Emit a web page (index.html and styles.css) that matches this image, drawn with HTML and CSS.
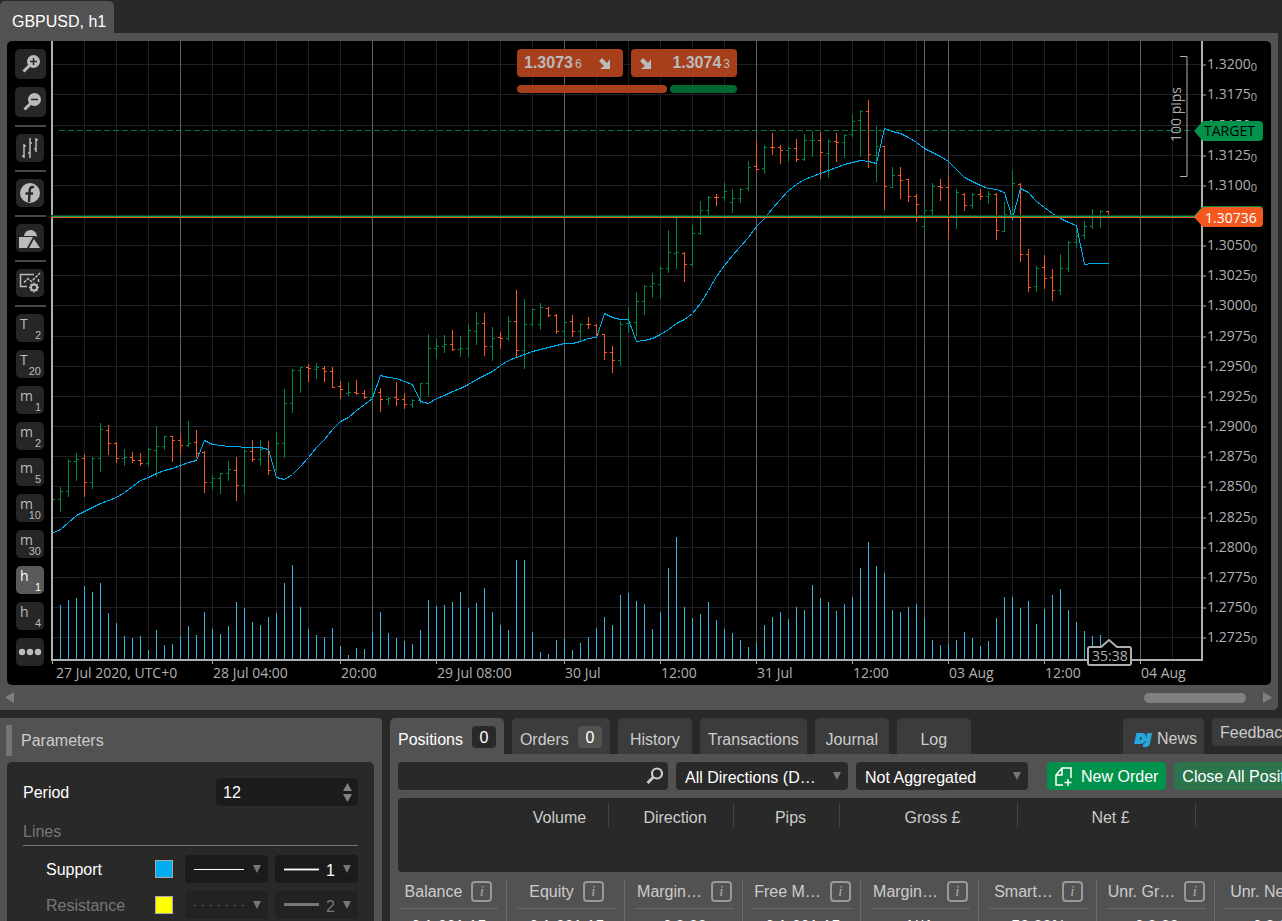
FILE: index.html
```html
<!DOCTYPE html>
<html lang="en">

<head>
    <meta charset="UTF-8">
    <meta name="viewport" content="width=device-width, initial-scale=1.0">
    <title>GBPUSD, h1</title>
    <link rel="stylesheet" href="styles.css">
</head>

<body>
    <div class="chart-tabs">
        <button class="chart-tab">GBPUSD, h1</button>
    </div>

    <section class="chart-window">
        <div class="chart-panel">
            <div class="toolbar">
                <button class="tool zoom" aria-label="Zoom in">
                    <svg width="20" height="20" viewBox="0 0 20 20">
                        <path d="M8.5 11.5L2.5 17.5" stroke="#bbb" stroke-width="3" />
                        <circle cx="12.5" cy="7.5" r="6.5" fill="#bbb" />
                        <path d="M12.5 4v7M9 7.5h7" stroke="#262626" stroke-width="1.5" />
                    </svg>
                </button>
                <button class="tool zoom" aria-label="Zoom out">
                    <svg width="20" height="20" viewBox="0 0 20 20">
                        <path d="M9.5 11.5L3.5 17.5" stroke="#bbb" stroke-width="3" />
                        <circle cx="13.5" cy="7.5" r="6.5" fill="#bbb" />
                        <path d="M10 7.5h7" stroke="#262626" stroke-width="1.5" />
                    </svg>
                </button>
                <hr>
                <button class="tool" aria-label="Chart type">
                    <svg width="20" height="22" viewBox="0 0 20 22" stroke="#bbb" fill="none">
                        <path d="M4 7v14M2 19h2M4 9h2M10 1v20M8 16h2M10 6h2M16 1v14M14 12h2M16 3h2" stroke-width="1.5" />
                    </svg>
                </button>
                <hr>
                <button class="tool" aria-label="Indicators">
                    <svg width="20" height="20" viewBox="0 0 20 20">
                        <circle cx="10" cy="10" r="10" fill="#bbb" />
                        <path d="M14 4.5C11 3 9.8 5 9.6 8L9 19M5.5 10.5h7.5" stroke="#262626" stroke-width="2.4" fill="none" />
                    </svg>
                </button>
                <hr>
                <button class="tool" aria-label="Objects">
                    <svg width="22" height="22" viewBox="0 0 22 22" fill="#bbb">
                        <path d="M5 9a6.500 6.500 0 1 1 13 1l-2-1z" />
                        <path d="M0 10h14L8 21H0z" />
                        <path d="M15 12l6 9H10z" />
                    </svg>
                </button>
                <hr>
                <button class="tool" aria-label="Chart settings">
                    <svg width="22" height="22" viewBox="0 0 22 22" fill="none" stroke="#bbb" stroke-width="1.5">
                        <path d="M15 2.500H1.500v12H8M19.500 7v3" />
                        <path d="M5 10.500l4-4 3.500 3L21 1" stroke-dasharray="3 1" />
                        <circle cx="15" cy="15.500" r="3" stroke-width="2" />
                        <path d="M15 10.500v2M15 18.500v2M10 15.500h2M18 15.500h2M11.500 12l1.500 1.500M17 17.500l1.500 1.500M18.500 12L17 13.500M13 17.500L11.500 19" />
                    </svg>
                </button>
                <hr>
                <button class="tool period">T<sub>2</sub></button>
                <button class="tool period">T<sub>20</sub></button>
                <button class="tool period">m<sub>1</sub></button>
                <button class="tool period">m<sub>2</sub></button>
                <button class="tool period">m<sub>5</sub></button>
                <button class="tool period">m<sub>10</sub></button>
                <button class="tool period">m<sub>30</sub></button>
                <button class="tool period active">h<sub>1</sub></button>
                <button class="tool period">h<sub>4</sub></button>
                <button class="tool" aria-label="More periods">
                    <svg width="24" height="8" viewBox="0 0 24 8" fill="#bbb">
                        <circle cx="4" cy="4" r="3.200" />
                        <circle cx="12" cy="4" r="3.200" />
                        <circle cx="20" cy="4" r="3.200" />
                    </svg>
                </button>
            </div>

            <div class="plot">
                <svg id="chart" role="img" aria-label="GBPUSD price chart"></svg>

                <div class="quotes">
                    <button class="quote">
                        <span>1.3073<small>6</small></span>
                        <svg width="12" height="12" viewBox="0 0 12 12" fill="#bbb"><path d="M0 3l3-3 5 5 3-4v10H1l4-3z" /></svg>
                    </button>
                    <button class="quote">
                        <svg width="12" height="12" viewBox="0 0 12 12" fill="#bbb"><path d="M0 3l3-3 5 5 3-4v10H1l4-3z" /></svg>
                        <span>1.3074<small>3</small></span>
                    </button>
                    <div class="sentiment">
                        <span class="sellers"></span>
                        <span class="buyers"></span>
                    </div>
                </div>
            </div>
        </div>

        <div class="scrollbar">
            <button class="arrow-left" aria-label="Scroll left"></button>
            <div class="thumb"></div>
            <button class="arrow-right" aria-label="Scroll right"></button>
        </div>
    </section>

    <div class="bottom">
        <section class="parameters">
            <h2>Parameters</h2>
            <div class="params-body">
                <div class="param-row">
                    <label for="period">Period</label>
                    <div class="spinner">
                        <input type="number" id="period" value="12" min="1">
                        <button class="arrow-up" aria-label="Increase"></button>
                        <button class="arrow-down" aria-label="Decrease"></button>
                    </div>
                </div>
                <h3>Lines</h3>
                <div class="line-row">
                    <label for="supportColor">Support</label>
                    <input type="color" id="supportColor" value="#00aeef">
                    <div class="select"><select class="style solid" aria-label="Support style"><option></option></select></div>
                    <div class="select"><select class="weight thin" aria-label="Support width"><option>1</option><option>2</option></select></div>
                </div>
                <div class="line-row muted">
                    <label for="resistanceColor">Resistance</label>
                    <input type="color" id="resistanceColor" value="#ffff00">
                    <div class="select"><select class="style dotted" aria-label="Resistance style"><option></option></select></div>
                    <div class="select"><select class="weight thick" aria-label="Resistance width"><option>2</option><option>1</option></select></div>
                </div>
            </div>
        </section>

        <section class="account">
            <div class="tabs">
                <button class="tab active">Positions <span class="badge">0</span></button>
                <button class="tab">Orders <span class="badge">0</span></button>
                <button class="tab">History</button>
                <button class="tab">Transactions</button>
                <button class="tab">Journal</button>
                <button class="tab">Log</button>
                <button class="tab news"><b class="dj">DJ</b> News</button>
                <button class="feedback">Feedback</button>
            </div>

            <div class="account-body">
                <div class="filters">
                    <div class="search">
                        <input type="text" aria-label="Search positions">
                        <svg width="18" height="18" viewBox="0 0 18 18" fill="none" stroke="#ccc">
                            <circle cx="11" cy="6.500" r="5" stroke-width="2.200" />
                            <path d="M7 10.500L1.500 16" stroke-width="3" />
                        </svg>
                    </div>
                    <div class="select"><select aria-label="Direction"><option>All Directions (D…</option></select></div>
                    <div class="select"><select aria-label="Aggregation"><option>Not Aggregated</option></select></div>
                    <button class="new-order">
                        <svg width="18" height="20" viewBox="0 0 18 20" fill="none" stroke="#fff" stroke-width="1.500">
                            <path d="M8 18H1V8l6-7h9v10M1 8h6V1M13 12v7M9.500 15.500h7" />
                        </svg>
                        New Order
                    </button>
                    <button class="close-all">Close All Positions</button>
                </div>

                <div class="positions">
                    <table>
                        <thead>
                            <tr>
                                <th class="c-id"></th>
                                <th class="c-volume">Volume</th>
                                <th class="c-direction">Direction</th>
                                <th class="c-pips">Pips</th>
                                <th class="c-money">Gross £</th>
                                <th class="c-money">Net £</th>
                                <th></th>
                            </tr>
                        </thead>
                    </table>
                </div>

                <dl class="metrics">
                    <div><dt>Balance <i>i</i></dt><dd>£ 1,661.15</dd></div>
                    <div><dt>Equity <i>i</i></dt><dd>£ 1,661.15</dd></div>
                    <div><dt>Margin… <i>i</i></dt><dd>£ 0.00</dd></div>
                    <div><dt>Free M… <i>i</i></dt><dd>£ 1,661.15</dd></div>
                    <div><dt>Margin… <i>i</i></dt><dd>N/A</dd></div>
                    <div><dt>Smart… <i>i</i></dt><dd>50.00%</dd></div>
                    <div><dt>Unr. Gr… <i>i</i></dt><dd>£ 0.00</dd></div>
                    <div><dt>Unr. Net <i>i</i></dt><dd>£ 0.00</dd></div>
                </dl>
            </div>
        </section>
    </div>

    <script src="chart.js"></script>
</body>

</html>
```

FILE: styles.css
```css
* {
    box-sizing: border-box;
}

body {
    font-family: "Liberation Sans", Arial, sans-serif;
    font-size: 16px;
    line-height: 19px;
    background-color: #292929;
    color: #ccc;
    margin: 0;
    height: 100vh;
    overflow: hidden;
}

button,
input,
select {
    font: inherit;
    color: inherit;
    border: none;
    margin: 0;
    padding: 0;
    background: none;
}

button {
    cursor: pointer;
    white-space: nowrap;
}

/* chart window */

.chart-tabs {
    display: flex;
    padding-top: 1px;
}

.chart-tab {
    height: 32px;
    padding: 8px 8px 0 12px;
    background-color: #525252;
    color: white;
    border-radius: 5px 5px 0 0;
}

.chart-window {
    background-color: #525252;
    margin-right: 4px;
    padding: 8px 7px 0;
    border-radius: 0 0 5px 0;
}

.chart-panel {
    display: flex;
    background-color: black;
    border-radius: 5px;
    overflow: hidden;
}

.toolbar {
    display: flex;
    flex-direction: column;
    gap: 8px;
    width: 44px;
    padding: 8px 5px 8px 8px;
}

.toolbar hr {
    width: 31px;
    height: 2px;
    margin: 0 0 -1px;
    border: none;
    background-color: #484848;
}

.tool {
    display: flex;
    align-items: center;
    justify-content: center;
    width: 28px;
    height: 28px;
    margin-left: 1px;
    background-color: #262626;
    border-radius: 5px;
    flex-shrink: 0;
}

.tool.zoom {
    width: 31px;
    height: 30px;
    margin-left: 0;
}

.tool.period {
    justify-content: space-between;
    align-items: flex-start;
    padding: 0 3px 0 4px;
    font-family: "Open Sans", "Noto Sans", sans-serif;
    font-size: 14px;
    line-height: 20px;
    color: #bbb;
}

.tool.period sub {
    align-self: flex-end;
    margin-left: -8px;
    font-family: "Liberation Sans", Arial, sans-serif;
    font-size: 11px;
    line-height: 14px;
}

.tool.period.active {
    background-color: #5a5a5a;
    color: white;
}

.plot {
    position: relative;
    flex: 1;
    min-width: 0;
}

#chart {
    display: block;
    width: 100%;
    height: 644px;
    font-family: "Open Sans", "Noto Sans", sans-serif;
    font-size: 14px;
    fill: #b0b0b0;
}

#chart .sub {
    font-size: 11px;
}

#chart .tag-text {
    fill: black;
}

#chart .tag-text.light {
    fill: white;
}

/* the price axis on the right takes 68px */
.quotes {
    position: absolute;
    top: 8px;
    left: 0;
    right: 68px;
    display: grid;
    grid-template-columns: 106px 106px;
    justify-content: center;
    gap: 8px;
}

.quote {
    display: flex;
    align-items: center;
    justify-content: space-between;
    height: 28px;
    padding: 1px 12px 0 7px;
    background-color: #a83f1c;
    border-radius: 4px;
    color: #bbb;
    font-weight: bold;
}

.quote + .quote {
    padding: 1px 7px 0 9px;
}

.quote small {
    margin-left: 2px;
    font-size: 12px;
    font-weight: normal;
}

.sentiment {
    display: flex;
    grid-column: span 2;
    gap: 3px;
    height: 8px;
}

.sentiment span {
    border-radius: 4px;
}

.sellers {
    flex: 150;
    background-color: #a83f1c;
}

.buyers {
    flex: 67;
    background-color: #006830;
}

.scrollbar {
    display: flex;
    align-items: center;
    height: 25px;
    margin: 0 -1px 0 -2px;
}

.thumb {
    width: 102px;
    height: 10px;
    margin: 0 17px 0 auto;
    background-color: #808080;
    border-radius: 5px;
}

.arrow-left,
.arrow-right,
.arrow-up,
.arrow-down {
    width: 9px;
    height: 11px;
    background-color: #808080;
}

.arrow-left {
    clip-path: polygon(100% 0, 100% 100%, 0 50%);
}

.arrow-right {
    clip-path: polygon(0 0, 100% 50%, 0 100%);
}

.arrow-up {
    clip-path: polygon(50% 0, 100% 100%, 0 100%);
}

.arrow-down {
    clip-path: polygon(0 0, 100% 0, 50% 100%);
}

/* bottom area */

.bottom {
    display: flex;
    gap: 8px;
    margin-top: 8px;
}

.parameters {
    width: 382px;
    flex-shrink: 0;
    padding: 7px 8px 8px 6px;
    background-color: #525252;
    border-radius: 0 4px 0 0;
}

.parameters h2 {
    margin: 0 0 6px;
    padding-left: 9px;
    border-left: 6px solid #757575;
    font-size: 16px;
    font-weight: normal;
    line-height: 31px;
}

.params-body {
    margin-left: 1px;
    padding: 16px;
    background-color: #292929;
    border-radius: 5px;
    color: white;
}

.param-row,
.line-row {
    display: flex;
    align-items: center;
}

.param-row {
    justify-content: space-between;
}

.spinner {
    display: grid;
    grid-template-columns: 1fr 9px;
    row-gap: 3px;
    align-content: center;
    width: 142px;
    height: 28px;
    padding: 1px 6px 0 7px;
    background-color: #1b1b1b;
    border-radius: 4px;
}

.spinner input {
    grid-row: span 2;
    width: 100%;
    outline: none;
    appearance: textfield;
}

.spinner input::-webkit-inner-spin-button {
    display: none;
}

.spinner button {
    height: 8px;
}

.params-body h3 {
    margin: 16px 0 9px;
    padding-bottom: 3px;
    border-bottom: 1px solid #757575;
    color: #777;
    font-size: 16px;
    font-weight: normal;
    line-height: 20px;
}

.line-row {
    gap: 7px;
    margin-bottom: 8px;
    padding-left: 23px;
}

.line-row label {
    flex: 1;
}

.param-row label,
.line-row label {
    padding-top: 1px;
}

.line-row .select {
    width: 83px;
    background-color: #1b1b1b;
}

.line-row input {
    width: 18px;
    height: 18px;
    margin-right: 5px;
    border: 1px solid #aaa;
    flex-shrink: 0;
}

.line-row input::-webkit-color-swatch-wrapper {
    padding: 0;
}

.line-row input::-webkit-color-swatch {
    border: none;
}

.line-row.muted {
    color: #777;
}

.line-row.muted .select {
    background-color: #222;
}

.select {
    position: relative;
    height: 28px;
    background-color: #292929;
    border-radius: 4px;
    color: white;
}

.muted .select {
    color: #777;
}

.select select {
    appearance: none;
    width: 100%;
    height: 100%;
    padding: 3px 24px 0 9px;
    outline: none;
}

.select::after {
    content: "";
    position: absolute;
    top: 10px;
    right: 7px;
    width: 8px;
    height: 8px;
    background-color: #777;
    clip-path: polygon(0 0, 100% 0, 50% 100%);
    pointer-events: none;
}

.select .style {
    background: linear-gradient(white, white) 9px 14px / 50px 1px no-repeat;
}

.select .style.dotted {
    background: repeating-linear-gradient(to right, #666 0 2px, transparent 2px 8px) 9px 14px / 50px 1px no-repeat;
}

.select .weight {
    padding-left: 51px;
    padding-right: 0;
    background: linear-gradient(white, white) 9px 14px / 35px 1px no-repeat, linear-gradient(#777, #777) 9px 13px / 35px 3px no-repeat;
}

.select .weight.thick {
    background: linear-gradient(#777, #777) 9px 12px / 35px 3px no-repeat;
}

.account {
    flex: 1;
    min-width: 0;
}

.tabs {
    display: flex;
    gap: 8px;
    height: 36px;
}

.tab {
    display: flex;
    align-items: center;
    justify-content: center;
    min-width: 74px;
    padding: 7px 8px 0;
    background-color: #3c3c3c;
    border-radius: 5px 5px 0 0;
    flex-shrink: 0;
}

.tab.active {
    background-color: #525252;
    color: white;
}

.badge {
    width: 24px;
    height: 22px;
    margin: -5px 0 0 9px;
    background-color: #525252;
    border-radius: 4px;
    color: white;
    line-height: 24px;
}

.active .badge {
    background-color: #292929;
}

.news {
    gap: 6px;
    margin-left: auto;
    padding: 5px 7px 0 12px;
}

.dj {
    font-family: "DejaVu Sans", sans-serif;
    font-size: 13px;
    font-style: oblique;
    color: #28a8e0;
    -webkit-text-stroke: 2px #28a8e0;
}

.feedback {
    width: 70px;
    height: 28px;
    padding-left: 8px;
    overflow: hidden;
    background-color: #3c3c3c;
    border-radius: 4px 0 0 4px;
    flex-shrink: 0;
    text-align: left;
}

.account-body {
    padding: 8px 0 0 8px;
    background-color: #525252;
}

.filters {
    display: flex;
    gap: 8px;
    height: 28px;
}

.filters > * {
    flex-shrink: 0;
}

.filters .select {
    width: 172px;
}

.search {
    display: flex;
    align-items: center;
    width: 270px;
    padding: 0 4px 0 8px;
    background-color: #292929;
    border-radius: 4px;
}

.search input {
    flex: 1;
    min-width: 0;
    outline: none;
}

.new-order,
.close-all {
    display: flex;
    align-items: center;
    padding: 1px 7px 0 8px;
    background-color: #00924a;
    border-radius: 4px;
    color: white;
}

.new-order {
    gap: 8px;
    margin-left: 11px;
    padding-right: 8px;
}

.close-all {
    background-color: #2b744c;
}

.account-body,
.positions {
    overflow: hidden;
}

.positions {
    height: 74px;
    margin-top: 8px;
    background-color: #292929;
    border-radius: 4px 0 0 4px;
}

.positions table {
    width: 100%;
    min-width: 884px;
    table-layout: fixed;
    border-collapse: collapse;
}

.positions th {
    height: 36px;
    padding: 2px 0 0 7px;
    font-weight: normal;
    background: linear-gradient(#454545, #454545) right 5px / 1px 24px no-repeat;
}

.positions th.c-id,
.positions th:last-child {
    background: none;
}

.c-id {
    width: 105px;
}

.c-volume {
    width: 106px;
}

.c-direction {
    width: 125px;
}

.c-pips {
    width: 106px;
}

.c-money {
    width: 178px;
}

.metrics {
    display: flex;
    margin: 8px 0 0 -9px;
}

.metrics div {
    width: 118px;
    padding: 0 8px 0 10px;
    border-right: 1px solid #6a6a6a;
    flex-shrink: 0;
}

.metrics dt {
    display: flex;
    align-items: center;
    justify-content: center;
    gap: 9px;
    height: 29px;
    padding-bottom: 6px;
    border-bottom: 1px solid #6a6a6a;
    white-space: nowrap;
}

.metrics i {
    width: 21px;
    height: 21px;
    border: 2px solid #999;
    border-radius: 4px;
    color: #aaa;
    font: italic 15px/16px "Liberation Serif", serif;
    text-align: center;
}

.metrics dd {
    margin: 8px 0 0;
    text-align: center;
    color: white;
}
```

FILE: chart.js
```javascript
const svg = document.getElementById("chart");
const TOP = 41;      // vertical origin of the data below
const FIRST = 9;     // x of the first bar
const STEP = 8;
const AXIS_Y = 618;
const GREEN = "#00853e";
const RED = "#f4581e";

// high, low, open, close
const bars = [
    [487,512,499,491],[459,497,491,461],[453,481,461,459],[454,497,458,482],[457,489,482,458],[423,472,458,429],
    [425,455,430,443],[442,463,443,458],[449,466,458,457],[452,463,457,460],[453,466,460,463],[448,467,463,449],
    [426,477,450,446],[436,450,446,436],[436,462,436,440],[435,454,440,445],[421,447,445,443],[430,458,442,453],
    [451,493,452,482],[475,490,482,478],[473,494,478,473],[461,481,473,469],[457,501,470,485],[449,494,485,451],
    [440,462,451,459],[440,466,459,449],[441,475,449,470],[432,471,469,443],[389,458,443,403],[369,413,403,370],
    [367,393,370,367],[364,382,367,368],[363,379,369,367],[366,382,368,371],[367,388,371,387],[381,399,386,389],
    [382,396,393,392],[380,395,392,393],[390,399,393,397],[379,398,397,393],[388,412,392,399],[397,405,399,398],
    [382,406,397,399],[393,409,399,404],[399,408,404,400],[383,404,400,383],[334,397,383,348],[338,359,348,346],
    [335,353,346,344],[330,351,344,349],[336,357,349,348],[324,357,348,330],[312,345,331,323],[313,356,323,346],
    [327,361,346,338],[332,349,337,338],[316,341,338,321],[290,358,321,350],[299,369,350,324],[309,326,324,309],
    [303,330,324,307],[307,317,308,315],[314,334,315,331],[319,338,331,322],[315,337,321,331],[323,341,331,324],
    [317,329,324,324.5],[324,336,325,334],[334,360,334,352],[346,373,352,360],[321,366,360,324],[307,333,323,322],
    [292,336,322,301],[285,315,301,286],[273,298,286,283],[266,299,284,268],[230,273,268,252],[218,269,253,252],
    [252,282,253,264],[225,267,264,233],[201,235,233,210],[196,217,210,197],[194,206,197,197.5],[182,201,197,191],
    [189,213,202,198],[188,203,198,189],[161,191,188,167],[141,171,166,169],[145,174,168,147],[133,155,147,147.5],
    [145,164,147,150],[146,162,150,148],[139,162,148,159],[134,161,159,140],[131,157,140,140],[132,179,140,152],
    [139,178,153,141],[133,162,141,142],[134,158,142,135],[114,138,134,121],[110,157,120,111],[100,168,111,154],
    [126,182,155,146],[146,210,146,186],[167,188,187,175],[167,199,175,180],[179,202,179,196],[194,222,196,204],
    [207,231,226,210],[183,215,210,186],[179,201,186,187],[177,239,187,217],[189,229,217,192],[193,211,194,205],
    [193,209,205,194],[189,200,194,196],[191,204,196,194],[193,240,194,230],[202,232,231,214],[170,217,214,183],
    [183,262,184,254],[249,292,254,287],[266,292,286,268],[255,289,267,278],[269,301,277,290],[254,295,290,268],
    [241,272,268,242],[225,248,242,235],[221,239,235,226],[209,229,226,215],[210,228,215,211],[211,217,211,215]
];

const support = [
    529,522,515,511,507,503,500,497,492,486,480,477,473,470,468,465,462,460,440,444,445,446,446,447,447,447,449,477,479,474,
    466,457,447,439,429,421,417,410,404,398,375,377,378,381,384,401,403,398,395,391,388,384,379,375,371,365,360,357,354,351,
    349,347,345,343,343,341,338,337,313,317,319,319,341,340,338,334,329,323,319,313,303,290,276,265,255,246,237,226,218,208,
    199,190,184,179,176,173,170,167,164,162,160,161,163,128,131,133,137,142,148,152,156,161,169,177,181,185,188,189,192,218,
    188,192,201,207,213,218,222,225,264,263,263,263
];

const volumes = [
    605,600,598,586,592,583,613,623,636,638,636,650,630,645,644,636,626,635,612,629,634,626,602,608,622,625,617,613,583,565,
    607,629,635,637,628,646,655,648,649,632,612,633,638,641,644,630,600,606,605,602,592,608,603,588,612,625,630,560,560,632,
    652,654,640,638,650,643,637,628,617,625,595,593,601,604,629,612,568,537,607,618,614,602,620,629,633,640,647,643,625,617,
    612,619,607,610,585,598,602,611,604,597,568,542,566,573,610,612,607,604,618,640,645,644,640,632,638,646,641,618,597,597,
    608,601,624,609,595,589,610,622,631,636,635
];

const dayLines = [129, 321, 513, 705, 873, 897, 1089];
const timeLabels = [
    [1, "27 Jul 2020, UTC+0", 4], [161, "28 Jul 04:00", 1], [289, "20:00", 1], [385, "29 Jul 08:00", 1],
    [513, "30 Jul", 1], [609, "12:00", 1], [705, "31 Jul", 1], [801, "12:00", 1], [897, "03 Aug", 1],
    [993, "12:00", 1], [1089, "04 Aug", 1]
];

function rect(x, y, w, h, color) {
    return `<rect x="${x}" y="${y}" width="${w}" height="${h}" fill="${color}"/>`;
}

// y of the i-th price level, 25 pips apart
function levelY(i) {
    return Math.floor(23.7 + i * 30.16);
}

function draw() {
    const right = svg.clientWidth - 70;
    let out = "";

    // grid
    for (let x = 33; x < right; x += 32) {
        out += rect(x, 0, 1, AXIS_Y, "#1e1e24");
    }
    for (let i = 0; i < 20; i++) {
        out += rect(1, levelY(i), right, 1, "#1e1e24");
    }
    dayLines.forEach(x => out += rect(x, 0, 1, AXIS_Y, "#626262"));
    for (let x = 8; x < right - 8; x += 9) {
        out += rect(x, 89, Math.min(6, right - 8 - x), 1, "#00783a");
    }

    volumes.forEach((v, i) => {
        out += rect(FIRST + i * STEP, v - TOP, 1, 659 - v, "#36b5ec");
    });

    // OHLC bars
    out += rect(2, 458, 2, 1, GREEN);
    bars.forEach(([high, low, open, close], i) => {
        const x = FIRST + i * STEP;
        const color = close > open ? RED : GREEN;
        out += rect(x, high - TOP, 1, low - high, color);
        out += rect(x - 2, open - TOP, 2, 1, color);
        out += rect(x + 1, Math.floor(close) - TOP, 2, 1, color);
    });

    const points = support.map((y, i) => `${FIRST + 0.5 + i * STEP},${y + 0.5 - TOP}`).join(" ");
    out += `<polyline points="2,492 ${points}" fill="none" stroke="#00aeef" shape-rendering="crispEdges"/>`;

    // axes
    out += rect(0, 0, 2, AXIS_Y + 2, "#b0b0b0");
    out += rect(right, 0, 2, AXIS_Y + 2, "#b0b0b0");
    out += rect(0, AXIS_Y, right + 2, 2, "#b0b0b0");
    timeLabels.forEach(([x, text, dx]) => {
        out += rect(x, AXIS_Y + 2, 1, 3, "#b0b0b0");
        out += `<text x="${x + dx}" y="637">${text}</text>`;
    });
    for (let i = 0; i < 20; i++) {
        if (i === 5) continue;   // covered by the current price
        const y = levelY(i);
        const price = (1.32 - i * 0.0025).toFixed(4);
        out += rect(right + 2, y, 3, 2, "#555");
        out += `<text x="${right + 6}" y="${y + 5}">${price}<tspan class="sub" dy="2">0</tspan></text>`;
    }

    // scale bracket
    out += `<path d="M${right - 21} 15.5h7v120h-7" fill="none" stroke="#b0b0b0"/>`;
    out += `<text transform="translate(${right - 20} 101) rotate(-90)">100 pips</text>`;

    // current price and target
    out += rect(0, 174, right - 4, 1, "#0b4426");
    out += rect(0, 175, right - 4, 1, "#00a651");
    out += rect(0, 176, right - 4, 1, RED);
    out += tag(right - 7, 90, "#00924a");
    out += tag(right - 7, 175, "#00924a");
    out += tag(right - 7, 176, RED);
    out += `<text class="tag-text" x="${right + 3}" y="95">TARGET</text>`;
    out += `<text class="tag-text light" x="${right + 4}" y="182">1.30736</text>`;

    // time left on the last bar
    out += `<path d="M1039 606h11l8-7 8 7h12q2 0 2 2v14q0 2-2 2h-39q-2 0-2-2v-14q0-2 2-2z" fill="black" stroke="#b0b0b0" stroke-width="2"/>`;
    out += `<text x="1041" y="620">35:38</text>`;

    svg.innerHTML = out;
}

function tag(x, y, color) {
    return `<path d="M${x} ${y}l8-9q1-1 3-1h54q4 0 4 4v12q0 4-4 4h-54q-2 0-3-1z" fill="${color}"/>`;
}

draw();
window.addEventListener("resize", draw);
```
